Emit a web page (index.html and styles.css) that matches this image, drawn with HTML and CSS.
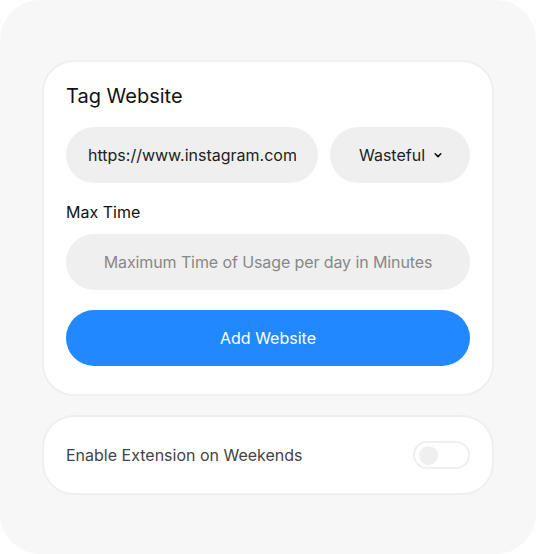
FILE: index.html
```html
<!DOCTYPE html>
<html lang="en">
<head>
    <meta charset="UTF-8">
    <meta name="viewport" content="width=device-width, initial-scale=1.0">
    <title>Tag Website</title>
    <link rel="stylesheet" href="styles.css">
</head>
<body>
    <div class="panel">
        <div class="card">
            <h2 class="title">Tag Website</h2>
            <div class="row">
                <input class="field url" type="text" value="https://www.instagram.com">
                <div class="field select">
                    <span>Wasteful</span>
                    <svg width="10" height="10" viewBox="0 0 10 10"><path d="M2.2 3.8 L5 6.6 L7.8 3.8" fill="none" stroke="#111" stroke-width="1.6" stroke-linecap="round" stroke-linejoin="round"/></svg>
                </div>
            </div>
            <label class="label">Max Time</label>
            <input class="field time" type="text" placeholder="Maximum Time of Usage per day in Minutes">
            <button class="add-btn">Add Website</button>
        </div>

        <div class="card weekend">
            <span>Enable Extension on Weekends</span>
            <div class="toggle"><div class="knob"></div></div>
        </div>
    </div>
</body>
</html>
```

FILE: styles.css
```css
body {
    margin: 0;
    background: #fff;
    font-family: Inter, "Noto Sans", sans-serif;
}
.panel {
    width: 536px;
    height: 554px;
    box-sizing: border-box;
    background: #f7f7f7;
    border-radius: 40px;
    padding: 60px 42px;
}
.card {
    background: #fff;
    border: 2px solid #efefef;
    border-radius: 32px;
    padding: 22px 22px 28px;
}
.title {
    margin: 0 0 19px;
    font-size: 20px;
    line-height: 24px;
    font-weight: 400;
    color: #111;
}
.row {
    display: flex;
    gap: 12px;
}
.field {
    height: 56px;
    box-sizing: border-box;
    border: none;
    border-radius: 28px;
    background: #efefef;
    font-family: inherit;
    font-size: 16px;
    color: #222;
    outline: none;
}
.url {
    width: 252px;
    padding: 0 22px;
}
.select {
    flex: 1;
    display: flex;
    align-items: center;
    justify-content: center;
    gap: 8px;
    padding-left: 2px;
}
.label {
    display: block;
    margin: 18px 0 11px;
    font-size: 16px;
    line-height: 22px;
    color: #111;
}
.time {
    width: 100%;
    text-align: center;
    letter-spacing: -0.1px;
}
.time::placeholder { color: #888; }
.add-btn {
    display: block;
    width: 100%;
    height: 56px;
    margin-top: 20px;
    border: none;
    border-radius: 28px;
    background: #2288ff;
    color: #fff;
    font-family: inherit;
    font-size: 16px;
}
.weekend {
    margin-top: 19px;
    padding: 24px 22px;
    display: flex;
    align-items: center;
    justify-content: space-between;
    font-size: 16px;
    color: #444;
}
.toggle {
    width: 57px;
    height: 28px;
    box-sizing: border-box;
    border: 2px solid #efefef;
    border-radius: 14px;
    display: flex;
    align-items: center;
    padding-left: 4px;
}
.knob {
    width: 19px;
    height: 19px;
    border-radius: 50%;
    background: #efefef;
}
```
